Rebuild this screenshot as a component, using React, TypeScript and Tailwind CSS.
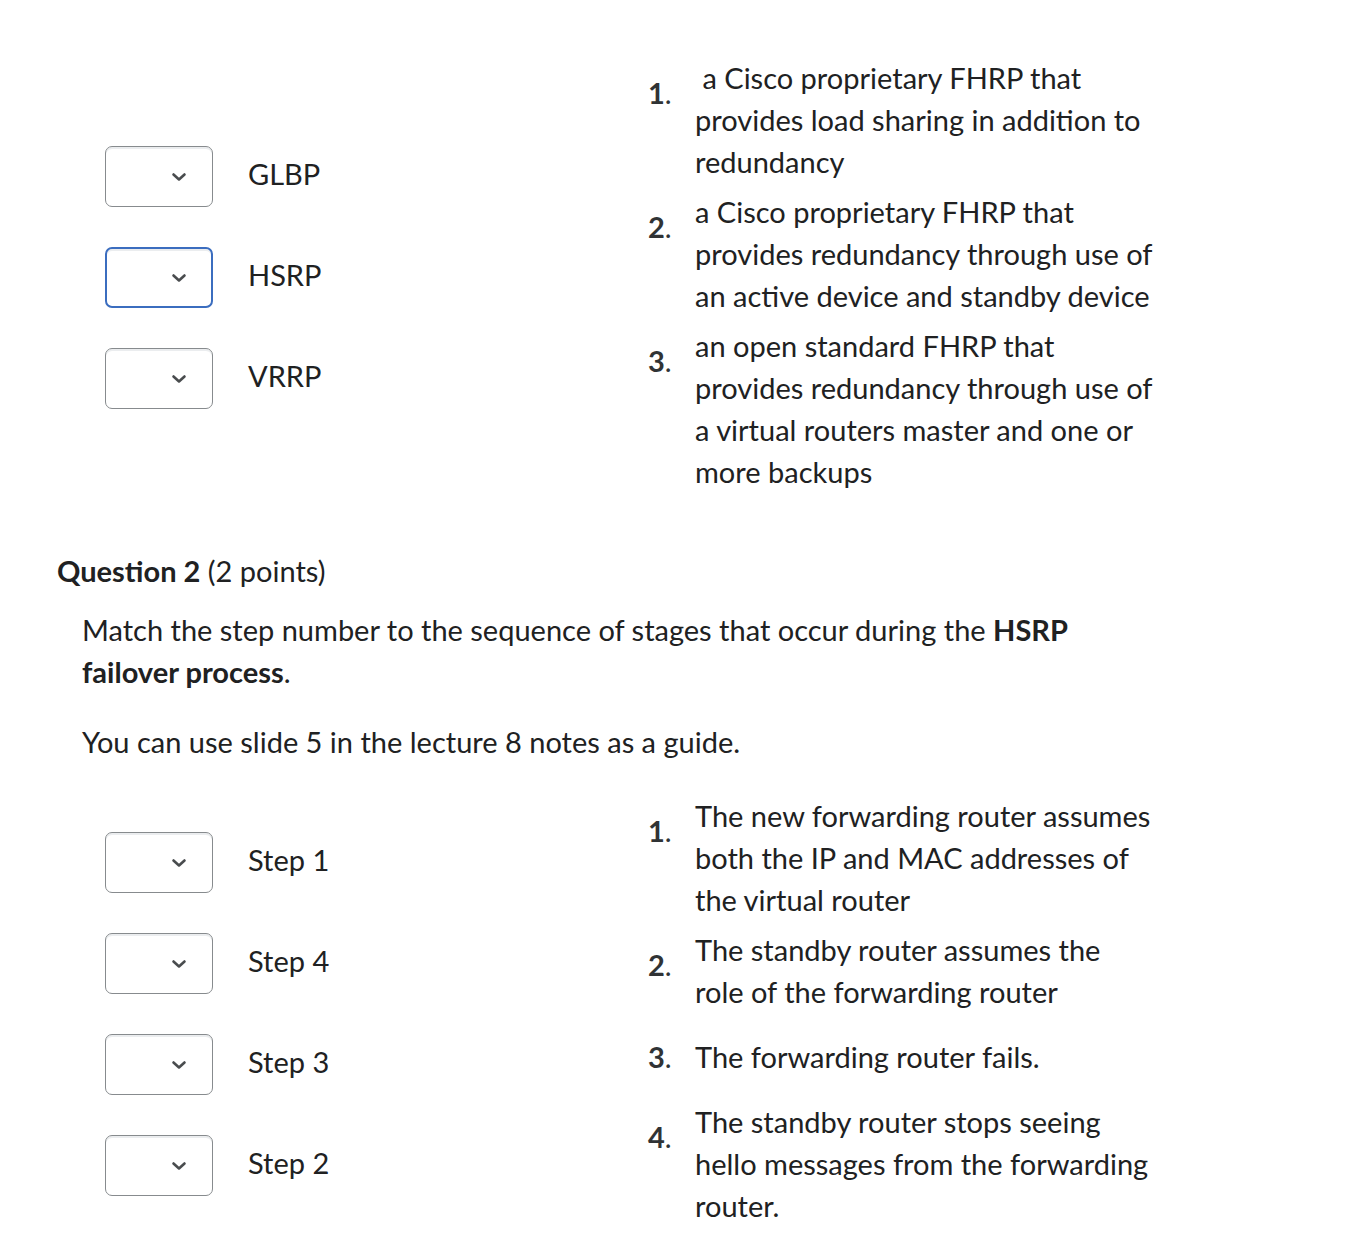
import React from "react"

type Choice = { num: string; lines: React.ReactNode }

function Chevron() {
  return (
    <svg width="16" height="10" viewBox="0 0 16 10" fill="none">
      <polyline points="2.5,2.5 8,7.5 13.5,2.5" stroke="#494c4e" strokeWidth="2.6" strokeLinecap="round" strokeLinejoin="round" />
    </svg>
  )
}

function SelectBox({ focused = false }: { focused?: boolean }) {
  return (
    <div
      className={
        focused
          ? "w-[108px] h-[61px] rounded-[7px] border-2 border-[#3b6dbf] bg-white shadow-[inset_0_2px_0_0_rgba(177,185,190,0.25)] flex items-center justify-end pr-[24px] shrink-0"
          : "w-[108px] h-[61px] rounded-[7px] border border-[#878b8e] bg-white shadow-[inset_0_2px_0_0_rgba(177,185,190,0.25)] flex items-center justify-end pr-[25px] shrink-0"
      }
    >
      <Chevron />
    </div>
  )
}

function MatchRow({ label, focused }: { label: string; focused?: boolean }) {
  return (
    <div className="flex items-center">
      <SelectBox focused={focused} />
      <span className="ml-[35px] pb-[6px]">{label}</span>
    </div>
  )
}

function ChoiceList({ items }: { items: Choice[] }) {
  return (
    <div className="flex flex-col gap-[8px]">
      {items.map((c) => (
        <div key={c.num} className="flex">
          <div className="w-[47px] shrink-0 self-start py-[15px] text-[#303335]">
            <span className="font-bold">{c.num}</span>.
          </div>
          <div className="w-[461px] self-center">{c.lines}</div>
        </div>
      ))}
    </div>
  )
}

export default function App() {
  const fhrp: Choice[] = [
    { num: "1", lines: <>&nbsp;a Cisco proprietary FHRP that provides load sharing in addition to redundancy</> },
    { num: "2", lines: "a Cisco proprietary FHRP that provides redundancy through use of an active device and standby device" },
    { num: "3", lines: "an open standard FHRP that provides redundancy through use of a virtual routers master and one or more backups" },
  ]

  const steps: Choice[] = [
    { num: "1", lines: "The new forwarding router assumes both the IP and MAC addresses of the virtual router" },
    { num: "2", lines: "The standby router assumes the role of the forwarding router" },
    { num: "3", lines: "The forwarding router fails." },
    { num: "4", lines: "The standby router stops seeing hello messages from the forwarding router." },
  ]

  return (
    <div className="min-h-screen bg-white text-[#202122] text-[29px] leading-[42px] font-['Lato',sans-serif]">
      <div className="flex pt-[57px]">
        <div className="w-[648px] shrink-0 pl-[105px] pt-[89px] flex flex-col gap-[40px]">
          <MatchRow label="GLBP" />
          <MatchRow label="HSRP" focused />
          <MatchRow label="VRRP" />
        </div>
        <ChoiceList items={fhrp} />
      </div>

      <h2 className="mt-[57px] pl-[57px]">
        <span className="font-bold">Question 2</span> (2 points)
      </h2>

      <div className="pl-[82px] mt-[17px]">
        <p className="w-[1050px]">
          Match the step number to the sequence of stages that occur during the <strong className="font-bold">HSRP failover process</strong>.
        </p>
        <p className="mt-[28px]">You can use slide 5 in the lecture 8 notes as a guide.</p>
      </div>

      <div className="flex mt-[32px] pb-[18px]">
        <div className="w-[648px] shrink-0 pl-[105px] pt-[37px] flex flex-col gap-[40px]">
          <MatchRow label="Step 1" />
          <MatchRow label="Step 4" />
          <MatchRow label="Step 3" />
          <MatchRow label="Step 2" />
        </div>
        <ChoiceList items={steps} />
      </div>
    </div>
  )
}
